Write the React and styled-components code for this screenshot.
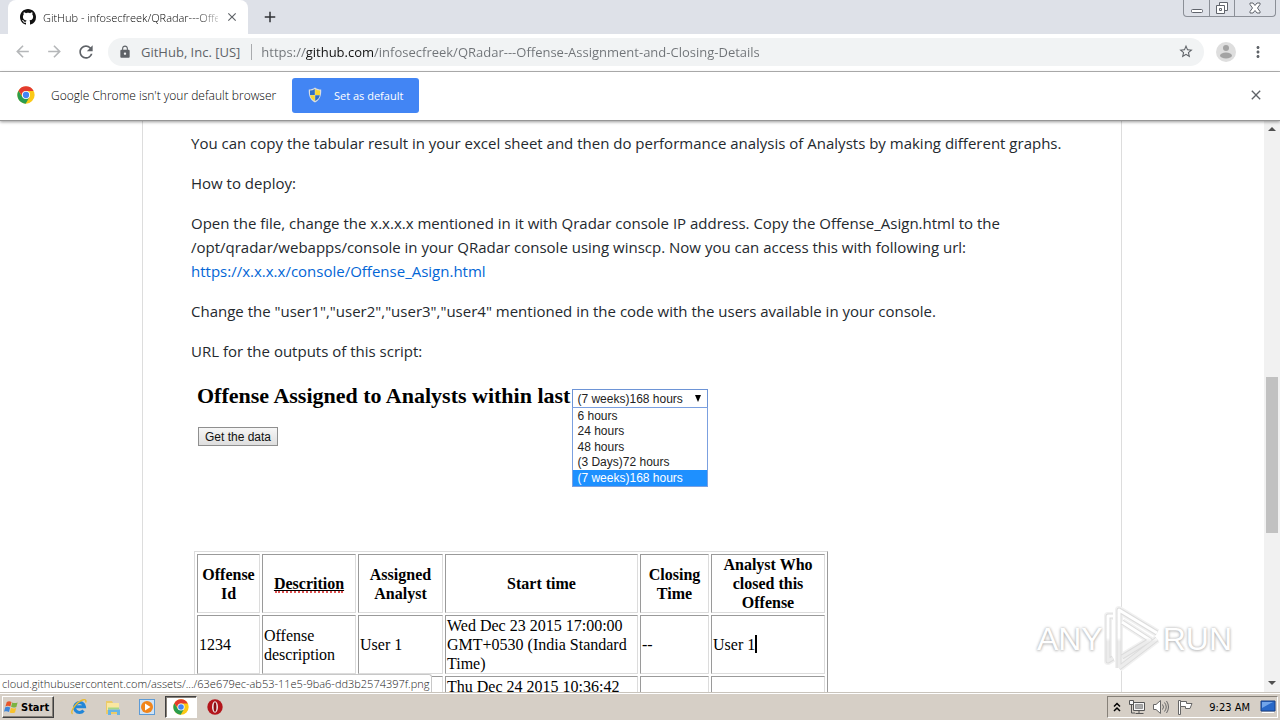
import React, { useState } from 'react';
import styled, { createGlobalStyle, css } from 'styled-components';
import {
    MdAdd,
    MdArrowBack,
    MdArrowForward,
    MdClose,
    MdLock,
    MdMoreVert,
    MdRefresh,
    MdStarBorder,
} from 'react-icons/md';

const GlobalStyle = createGlobalStyle`
    * {
        box-sizing: border-box;
    }

    body {
        margin: 0;
        background: #fff;
    }

    button {
        padding: 0;
        border: 0;
        background: none;
        font: inherit;
        color: inherit;
    }
`;

const uiFont = '"Open Sans", "Noto Sans", sans-serif';
const trayFont = '"DejaVu Sans Condensed", "DejaVu Sans", sans-serif';

const Desktop = styled.div`
    display: flex;
    flex-direction: column;
    height: 100vh;
    overflow: hidden;
    font-family: ${uiFont};
    font-size: 12px;
    color: #222;
`;

/* ---------- tab strip ---------- */

const TabStrip = styled.header`
    display: flex;
    flex: none;
    height: 34px;
    padding-left: 8px;
    background: #dee1e8;
`;

const Tab = styled.div`
    display: flex;
    align-items: center;
    gap: 7px;
    width: 240px;
    padding: 0 9px 0 12px;
    border-radius: 8px 8px 0 0;
    background: #fff;
`;

const TabTitle = styled.span`
    flex: 1;
    overflow: hidden;
    white-space: nowrap;
    font-size: 11px;
    font-weight: 300;
    color: #000;
    mask-image: linear-gradient(90deg, #000 88%, transparent 104%);
`;

const IconButton = styled.button`
    display: flex;
    flex: none;
    align-items: center;
    justify-content: center;
    width: ${({ $size }) => $size}px;
    height: ${({ $size }) => $size}px;
    color: ${({ $color }) => $color || '#5f6368'};
`;

const NewTab = styled(IconButton)`
    margin: 5px 0 0 10px;
`;

const WindowButtons = styled.div`
    display: flex;
    height: 17px;
    margin: 0 4px 0 auto;
    border: 1px solid #8b8f97;
    border-top: 0;
    border-radius: 0 0 4px 4px;
`;

const WindowButton = styled.button`
    display: flex;
    align-items: center;
    justify-content: center;
    width: ${({ $wide }) => ($wide ? 41 : 25)}px;

    & + & {
        border-left: 1px solid #8b8f97;
    }
`;

/* ---------- toolbar ---------- */

const Toolbar = styled.nav`
    display: flex;
    flex: none;
    align-items: center;
    height: 38px;
    padding: 0 10px 2px;
    border-bottom: 1px solid #b4b4b4;
    background: #fff;
`;

const NavButtons = styled.div`
    display: flex;
    gap: 8px;
    margin-right: 10px;
`;

const AddressBar = styled.div`
    display: flex;
    flex: 1;
    align-items: center;
    height: 28px;
    padding: 0 10px;
    border-radius: 14px;
    background: #f1f3f4;
    font-size: 13px;
    color: #5f6368;
`;

const SiteOwner = styled.label`
    margin-left: 9px;
    padding-right: 11px;
    border-right: 1px solid #a9abae;
    line-height: 16px;
    white-space: nowrap;
`;

const AddressInput = styled.input`
    flex: 1;
    min-width: 0;
    padding: 0 9px;
    border: 0;
    outline: 0;
    font: inherit;
    color: #6f7377;
    background: linear-gradient(90deg, #6f7377 53px, #111 53px, #111 121px, #6f7377 121px);
    background-clip: text;
    -webkit-text-fill-color: transparent;
`;

const ToolbarEnd = styled.div`
    display: flex;
    align-items: center;
    gap: 10px;
    margin-left: 12px;
`;

/* ---------- default browser bar ---------- */

const InfoBar = styled.section`
    position: relative;
    z-index: 1;
    display: flex;
    flex: none;
    align-items: center;
    height: 49px;
    padding: 0 14px 2px 17px;
    border-bottom: 1px solid #969696;
    background: #fff;
    box-shadow: 0 1px 3px rgba(0, 0, 0, 0.4);
`;

const InfoText = styled.span`
    margin: 0 16px;
    font-size: 12px;
    font-weight: 300;
    color: #000;
`;

const DefaultButton = styled.button`
    display: flex;
    align-items: center;
    justify-content: center;
    gap: 12px;
    width: 127px;
    height: 35px;
    margin-right: auto;
    border-radius: 3px;
    background: #4285f4;
    font-size: 11px;
    color: #fff;
`;

/* ---------- page ---------- */

const Viewport = styled.div`
    position: relative;
    display: flex;
    flex: 1;
    min-height: 0;
    background: #fff;
`;

const PageArea = styled.main`
    flex: 1;
    overflow: hidden;
`;

const Readme = styled.article`
    max-width: 980px;
    min-height: 100%;
    margin: 0 auto;
    padding: 10px 48px 0;
    border: 1px solid #ddd;
    border-width: 0 1px;
    font-size: 15px;
    line-height: 24px;
    color: #24292e;

    p {
        margin: 0 0 16px;
    }

    a {
        color: #0366d6;
        text-decoration: none;
    }
`;

const Output = styled.section`
    padding: 0 3px;
    font-family: 'Liberation Serif', serif;
    color: #000;
`;

const PeriodRow = styled.div`
    display: flex;
    align-items: center;
    gap: 2px;
    padding: 4px 0 0 3px;
`;

const Title = styled.label`
    font-size: 22px;
    font-weight: bold;
    line-height: 24px;
`;

const Period = styled.div`
    position: relative;
    width: 136px;
    margin-top: 6px;
    font: 12px 'Liberation Sans', sans-serif;
`;

const PeriodSelect = styled.select`
    display: block;
    width: 100%;
    height: 19px;
    padding: 0 20px 0 4px;
    border: 1px solid #6d94d6;
    appearance: none;
    outline: 0;
    background: #fff;
    font: inherit;
    color: #222;
`;

const SelectArrow = styled.svg`
    position: absolute;
    top: 6px;
    right: 6px;
    pointer-events: none;
`;

const PeriodList = styled.ul`
    position: absolute;
    top: 18px;
    left: 0;
    width: 100%;
    margin: 0;
    padding: 0;
    border: 1px solid #7ba0e0;
    background: #fff;
    list-style: none;
`;

const PeriodOption = styled.li`
    padding-left: 4px;
    line-height: 15px;
    color: #222;

    &:nth-child(odd) {
        line-height: 16px;
    }

    ${({ $selected }) => $selected && css`
        background: #1e90ff;
        color: #fff;
    `}
`;

const GetData = styled.button`
    display: block;
    width: 80px;
    height: 19px;
    margin: 19px 0 105px 4px;
    border: 1px solid #8f8f8f;
    background: linear-gradient(#f6f6f6, #dedede);
    font: 12px 'Liberation Sans', sans-serif;
    color: #111;
`;

const OffenseTable = styled.table`
    width: 634px;
    table-layout: fixed;
    border: 1px solid #dcdcdc;
    border-right-color: #9a9a9a;
    border-spacing: 2px;
    font-size: 16px;
    line-height: 19px;

    th,
    td {
        padding: 0 1px;
        border: 1px solid #9a9a9a;
        border-right-color: #dcdcdc;
        border-bottom-color: #dcdcdc;
    }

    td {
        text-align: left;
    }
`;

const Misspelled = styled.span`
    text-decoration: underline;

    &::after {
        content: '';
        display: block;
        width: 68px;
        margin: -2px auto 0;
        border-bottom: 2px dotted #e05050;
    }
`;

const Caret = styled.span`
    display: inline-block;
    width: 2px;
    height: 18px;
    vertical-align: text-bottom;
    background: #000;
`;

const Scrollbar = styled.div`
    display: flex;
    flex: none;
    flex-direction: column;
    align-items: center;
    width: 16px;
    background: #f1f1f1;
`;

const ScrollSpace = styled.div`
    flex: ${({ $grow }) => $grow};
`;

const ScrollThumb = styled.div`
    flex: 155;
    width: 12px;
    background: #c1c1c1;
`;

const StatusBubble = styled.div`
    position: absolute;
    bottom: 0;
    left: 0;
    height: 18px;
    padding: 0 2px;
    border: 1px solid #c8c8c8;
    border-width: 1px 1px 0 0;
    border-radius: 0 3px 0 0;
    background: #fff;
    font-size: 11px;
    font-weight: 300;
    line-height: 17px;
    white-space: nowrap;
    color: #222;
`;

const Watermark = styled.div`
    position: absolute;
    right: 48px;
    bottom: 20px;
    display: flex;
    align-items: center;
    gap: 1px;
    font: 32px 'Liberation Sans', sans-serif;
    color: #fff;
    text-shadow: 0 0 3px #aaa, 0 1px 3px #ccc;
`;

/* ---------- taskbar ---------- */

const Taskbar = styled.footer`
    display: flex;
    flex: none;
    align-items: center;
    height: 28px;
    padding: 1px 2px 0;
    border-top: 1px solid #c9c4bc;
    background: #d6cfc6;
    box-shadow: inset 0 1px #fff;
`;

const StartButton = styled.button`
    display: flex;
    align-items: center;
    gap: 2px;
    height: 22px;
    width: 52px;
    padding-left: 1px;
    border: 1px solid;
    border-color: #fff #404040 #404040 #fff;
    box-shadow: inset -1px -1px #868078;
    font: bold 11px ${trayFont};
    color: #000;
`;

const QuickLaunch = styled.div`
    display: flex;
    gap: 2px;
    margin-left: 9px;
`;

const TaskButton = styled.button`
    display: flex;
    align-items: center;
    justify-content: center;
    width: 32px;
    height: 22px;

    ${({ $active }) => $active && css`
        border: 1px solid;
        border-color: #404040 #fff #fff #404040;
        background: #fff;
        box-shadow: inset 1px 1px #868078;
    `}
`;

const Tray = styled.div`
    display: flex;
    align-items: center;
    gap: 8px;
    height: 22px;
    margin-left: auto;
    padding: 0 1px 0 5px;
    border: 1px solid;
    border-color: #868078 #fff #fff #868078;
    font: 11px ${trayFont};
    color: #000;
`;

const Clock = styled.time`
    margin: 0 2px 0 8px;
`;

const GithubMark = () => (
    <svg width="16" height="16" viewBox="0 0 16 16">
        <path d="M8 0C3.58 0 0 3.58 0 8c0 3.54 2.29 6.53 5.47 7.59.4.07.55-.17.55-.38 0-.19-.01-.82-.01-1.49-2.01.37-2.53-.49-2.69-.94-.09-.23-.48-.94-.82-1.13-.28-.15-.68-.52-.01-.53.63-.01 1.08.58 1.23.82.72 1.21 1.87.87 2.33.66.07-.52.28-.87.51-1.07-1.78-.2-3.64-.89-3.64-3.95 0-.87.31-1.59.82-2.15-.08-.2-.36-1.02.08-2.12 0 0 .67-.21 2.2.82.64-.18 1.32-.27 2-.27.68 0 1.36.09 2 .27 1.53-1.04 2.2-.82 2.2-.82.44 1.1.16 1.92.08 2.12.51.56.82 1.27.82 2.15 0 3.07-1.87 3.75-3.65 3.95.29.25.54.73.54 1.48 0 1.07-.01 1.93-.01 2.2 0 .21.15.46.55.38A8.013 8.013 0 0016 8c0-4.42-3.58-8-8-8z" fill="#111" />
    </svg>
);

const ChromeLogo = ({ size }) => (
    <svg width={size} height={size} viewBox="0 0 24 24">
        <circle cx="12" cy="12" r="11.5" fill="#fbc916" />
        <path d="M2 6.300A11.500 11.500 0 0 0 11.500 23.500L16.800 14.700 12 12 7.200 14.700Z" fill="#2a9d4e" />
        <path d="M2 6.300A11.500 11.500 0 0 1 22 6.300V6.800H12A5.300 5.300 0 0 0 6.900 13Z" fill="#e33b2e" />
        <circle cx="12" cy="12" r="5.400" fill="#fff" />
        <circle cx="12" cy="12" r="4.200" fill="#4285f4" />
    </svg>
);

const ShieldIcon = () => (
    <svg width="14" height="16" viewBox="0 0 14 16">
        <path d="M7 .5C5 2 3 2.500.8 2.500.5 8.500 2 13 7 15.500 12 13 13.500 8.500 13.200 2.500 11 2.500 9 2 7 .5Z" fill="#d9dde2" />
        <path d="M6.800 2C5.300 3 3.700 3.500 2 3.600V8h4.800Z" fill="#2f6fc4" />
        <path d="M7.200 2C8.700 3 10.300 3.500 12 3.600V8H7.200Z" fill="#f6d632" />
        <path d="M2.100 8.300H6.800V14C4 12.600 2.500 10.500 2.100 8.300Z" fill="#f6d632" />
        <path d="M11.900 8.300H7.200V14C10 12.600 11.500 10.500 11.900 8.300Z" fill="#2f6fc4" />
    </svg>
);

const ProfileIcon = () => (
    <svg width="20" height="20" viewBox="0 0 20 20">
        <circle cx="10" cy="10" r="10" fill="#dedede" />
        <circle cx="10" cy="6" r="3" fill="#a3a3a3" />
        <ellipse cx="10" cy="13.500" rx="6" ry="3" fill="#a3a3a3" />
    </svg>
);

const MinimizeIcon = () => (
    <svg width="12" height="14" viewBox="0 0 12 14">
        <rect x=".5" y="8.500" width="11" height="3" rx="1" fill="#fff" stroke="#60646c" />
    </svg>
);

const RestoreIcon = () => (
    <svg width="14" height="14" viewBox="0 0 14 14" fill="#fff" stroke="#60646c">
        <path d="M4.500 1.500h8v8h-8z" />
        <path d="M1.500 4.500h8v8h-8z" />
        <path d="M4.500 7.500h2v2h-2z" />
    </svg>
);

const CloseWindowIcon = () => (
    <svg width="12" height="12" viewBox="0 0 12 12">
        <path d="M1 1h3l2 2.500L8 1h3v1.500L8.500 6 11 9.500V11H8L6 8.500 4 11H1V9.500L3.500 6 1 2.500Z" fill="#fff" stroke="#60646c" />
    </svg>
);

const ArrowIcon = ({ down }) => (
    <svg width="16" height="17" viewBox="0 0 16 17">
        <path d={down ? 'M4 6h8L8 10Z' : 'M4 10h8L8 6Z'} fill="#505050" />
    </svg>
);

const WindowsFlag = () => (
    <svg width="15" height="15" viewBox="0 0 16 16">
        <path d="M3 2C5 1 6.500 1.300 8 2.200L6.800 7C5 6 3.500 6 1.500 6.800Z" fill="#e8562a" />
        <path d="M8.800 2.600C10.500 3.500 12.500 3.400 14.500 2.600L13.200 7.400C11 8.200 9.300 8.200 7.500 7.300Z" fill="#7cb342" />
        <path d="M1.300 7.700C3.200 6.900 5 7 6.600 7.900L5.300 12.800C3.700 11.900 2 11.800 0 12.500Z" fill="#3f86d8" />
        <path d="M7.400 8.300C9 9.200 11 9.200 13 8.400L11.700 13.200C9.700 14 7.900 14 6.100 13.200Z" fill="#f8c22c" />
    </svg>
);

const ExplorerBrowserIcon = () => (
    <svg width="18" height="18" viewBox="0 0 18 18" fill="none">
        <path d="M13.500 12.500A5 5 0 1 1 14.500 8.800H5.500" stroke="#2186d8" strokeWidth="3" />
        <path d="M2.500 16C-.5 14 6 4.500 12.500 2c3-1 4 .2 3.200 2.400" stroke="#e9b92c" strokeWidth="1.400" />
    </svg>
);

const FolderIcon = () => (
    <svg width="18" height="18" viewBox="0 0 18 18">
        <path d="M2 3h6l1 2h6v11H2Z" fill="#eccb68" />
        <path d="M3 5h12v7H3Z" fill="#fae7a0" />
        <path d="M4 9.500h11v2H4Z" fill="#a6d785" />
        <path d="M4 16v-4.500h12V17h-3v-3H7v3H4Z" fill="#66b4e6" />
    </svg>
);

const MediaPlayerIcon = () => (
    <svg width="18" height="18" viewBox="0 0 18 18">
        <rect x="1.500" y="1.500" width="15" height="15" fill="#cfe3f6" stroke="#5d9bd6" />
        <circle cx="9" cy="9" r="6" fill="#f1851b" />
        <path d="M7 5.500v7L12.500 9Z" fill="#fff" />
    </svg>
);

const OperaIcon = () => (
    <svg width="16" height="16" viewBox="0 0 16 16">
        <circle cx="8" cy="8" r="7.700" fill="#b3151b" />
        <ellipse cx="8" cy="8" rx="3" ry="5.800" fill="#eee6e6" />
        <ellipse cx="8" cy="8" rx="1.400" ry="4.800" fill="#8c0d12" />
    </svg>
);

const ChevronsIcon = () => (
    <svg width="8" height="10" viewBox="0 0 8 10" fill="none" stroke="#000" strokeWidth="1.500">
        <path d="M1 4.500 4 1.500 7 4.500M1 9 4 6 7 9" />
    </svg>
);

const NetworkIcon = () => (
    <svg width="16" height="16" viewBox="0 0 16 16" fill="#f6f6f6" stroke="#555">
        <path d="M4.500 3.500h11v8h-11z" />
        <path d="M6.500 5.500h7v4h-7z" fill="#aaa" stroke="#999" />
        <path d="M6.500 14.500h8M10 12v2" />
        <path d="M.5 1.500h4v4h-4z" />
        <path d="M2.500 6v8H6" fill="none" />
    </svg>
);

const SpeakerIcon = () => (
    <svg width="16" height="16" viewBox="0 0 16 16" fill="none" stroke="#666">
        <path d="M.5 5.500h2.500L7.500 1.500v13L3 10.500H.5Z" fill="#fff" />
        <path d="M9.500 5.500q2 2.500 0 5M11.500 3.500q3.500 4.500 0 9M13.500 2q4 6 0 12" />
    </svg>
);

const FlagIcon = () => (
    <svg width="16" height="16" viewBox="0 0 16 16" fill="#fff" stroke="#666">
        <path d="M1.500 1.500h2v14h-2z" />
        <path d="M3.500 2.500h6v2h5.500l-2 5H8.500v-2h-5Z" />
    </svg>
);

const ShowDesktopIcon = () => (
    <svg width="16" height="14" viewBox="0 0 16 14">
        <path d="M1 1h14v10H1Z" fill="#2868c8" stroke="#173f84" />
        <path d="M2 2h11L2 8Z" fill="#71a5ea" />
        <path d="M2 12.500h12" stroke="#fff" />
    </svg>
);

const markPath = 'M9 10H4v45l5-3M15 62V4L53 27M18 16 46 34 18 51M15 62 53 33';

const PlayMark = () => (
    <svg width="58" height="66" viewBox="0 0 58 66" fill="none" strokeLinejoin="round">
        <defs>
            <linearGradient id="markFill" gradientUnits="userSpaceOnUse" x1="0" y1="0" x2="0" y2="66">
                <stop offset=".48" stopColor="#fff" />
                <stop offset=".54" stopColor="#ececec" />
            </linearGradient>
        </defs>
        <path d={markPath} stroke="#f1f1f1" strokeWidth="8" />
        <path d={markPath} stroke="#dcdcdc" strokeWidth="5" />
        <path d={markPath} stroke="url(#markFill)" strokeWidth="3" />
    </svg>
);

const periods = ['6 hours', '24 hours', '48 hours', '(3 Days)72 hours', '(7 weeks)168 hours'];

const columns = [
    { name: 'Offense Id', width: 63 },
    { name: 'Descrition', width: 94, misspelled: true },
    { name: 'Assigned Analyst', width: 85 },
    { name: 'Start time', width: 193 },
    { name: 'Closing Time', width: 69 },
    { name: 'Analyst Who closed this Offense' },
];

const offenses = [
    ['1234', 'Offense description', 'User 1', 'Wed Dec 23 2015 17:00:00 GMT+0530 (India Standard Time)', '--', 'User 1'],
    ['', '', '', 'Thu Dec 24 2015 10:36:42', '', ''],
];

const quickLaunch = [
    { name: 'Internet Explorer', icon: <ExplorerBrowserIcon /> },
    { name: 'Windows Explorer', icon: <FolderIcon /> },
    { name: 'Media Player', icon: <MediaPlayerIcon /> },
    { name: 'Google Chrome', icon: <ChromeLogo size={16} />, active: true },
    { name: 'Opera', icon: <OperaIcon /> },
];

const App = () => {

    const [url, setUrl] = useState('https://github.com/infosecfreek/QRadar---Offense-Assignment-and-Closing-Details');
    const [period, setPeriod] = useState('(7 weeks)168 hours');

    return (
        <Desktop>
            <GlobalStyle />
            <TabStrip>
                <Tab>
                    <GithubMark />
                    <TabTitle>GitHub - infosecfreek/QRadar---Offe</TabTitle>
                    <IconButton $size={14} aria-label="Close tab"><MdClose size={14} /></IconButton>
                </Tab>
                <NewTab $size={24} $color="#303236" aria-label="New tab"><MdAdd size={18} /></NewTab>
                <WindowButtons>
                    <WindowButton aria-label="Minimize"><MinimizeIcon /></WindowButton>
                    <WindowButton aria-label="Restore"><RestoreIcon /></WindowButton>
                    <WindowButton $wide aria-label="Close"><CloseWindowIcon /></WindowButton>
                </WindowButtons>
            </TabStrip>

            <Toolbar>
                <NavButtons>
                    <IconButton $size={24} $color="#b5b7b9" aria-label="Back"><MdArrowBack size={19} /></IconButton>
                    <IconButton $size={24} $color="#b5b7b9" aria-label="Forward"><MdArrowForward size={19} /></IconButton>
                    <IconButton $size={24} aria-label="Reload"><MdRefresh size={20} /></IconButton>
                </NavButtons>
                <AddressBar>
                    <MdLock size={14} />
                    <SiteOwner htmlFor="address">GitHub, Inc. [US]</SiteOwner>
                    <AddressInput id="address" value={url} onChange={(e) => setUrl(e.target.value)} />
                    <IconButton $size={16} aria-label="Bookmark"><MdStarBorder size={17} /></IconButton>
                </AddressBar>
                <ToolbarEnd>
                    <IconButton $size={20} aria-label="Profile"><ProfileIcon /></IconButton>
                    <IconButton $size={24} aria-label="Menu"><MdMoreVert size={18} /></IconButton>
                </ToolbarEnd>
            </Toolbar>

            <InfoBar>
                <ChromeLogo size={18} />
                <InfoText>Google Chrome isn't your default browser</InfoText>
                <DefaultButton><ShieldIcon />Set as default</DefaultButton>
                <IconButton $size={20} aria-label="Dismiss"><MdClose size={16} /></IconButton>
            </InfoBar>

            <Viewport>
                <PageArea>
                    <Readme>
                        <p>You can copy the tabular result in your excel sheet and then do performance analysis of Analysts by making different graphs.</p>
                        <p>How to deploy:</p>
                        <p>
                            Open the file, change the x.x.x.x mentioned in it with Qradar console IP address. Copy the Offense_Asign.html to the
                            <br />
                            /opt/qradar/webapps/console in your QRadar console using winscp. Now you can access this with following url:
                            <br />
                            <a href="#output">https://x.x.x.x/console/Offense_Asign.html</a>
                        </p>
                        <p>Change the "user1","user2","user3","user4" mentioned in the code with the users available in your console.</p>
                        <p>URL for the outputs of this script:</p>

                        <Output id="output">
                            <PeriodRow>
                                <Title htmlFor="period">Offense Assigned to Analysts within last</Title>
                                <Period>
                                    <PeriodSelect id="period" value={period} onChange={(e) => setPeriod(e.target.value)}>
                                        {periods.map((name) => (
                                            <option key={name}>{name}</option>
                                        ))}
                                    </PeriodSelect>
                                    <SelectArrow width="8" height="7" viewBox="0 0 8 7">
                                        <path d="M1 0h6L4 7Z" fill="#000" />
                                    </SelectArrow>
                                    <PeriodList role="listbox">
                                        {periods.map((name) => (
                                            <PeriodOption
                                                key={name}
                                                role="option"
                                                aria-selected={name === period}
                                                $selected={name === period}
                                                onClick={() => setPeriod(name)}
                                            >
                                                {name}
                                            </PeriodOption>
                                        ))}
                                    </PeriodList>
                                </Period>
                            </PeriodRow>
                            <GetData>Get the data</GetData>
                            <OffenseTable>
                                <colgroup>
                                    {columns.map(({ name, width }) => (
                                        <col key={name} width={width} />
                                    ))}
                                </colgroup>
                                <thead>
                                    <tr>
                                        {columns.map(({ name, misspelled }) => (
                                            <th key={name}>{misspelled ? <Misspelled>{name}</Misspelled> : name}</th>
                                        ))}
                                    </tr>
                                </thead>
                                <tbody>
                                    {offenses.map((cells, row) => (
                                        <tr key={row}>
                                            {cells.map((cell, i) => (
                                                <td key={i}>
                                                    {cell}
                                                    {row === 0 && i === 5 && <Caret />}
                                                </td>
                                            ))}
                                        </tr>
                                    ))}
                                </tbody>
                            </OffenseTable>
                        </Output>
                    </Readme>
                </PageArea>
                <Scrollbar>
                    <ArrowIcon />
                    <ScrollSpace $grow={239} />
                    <ScrollThumb />
                    <ScrollSpace $grow={142} />
                    <ArrowIcon down />
                </Scrollbar>
                <StatusBubble>cloud.githubusercontent.com/assets/.../63e679ec-ab53-11e5-9ba6-dd3b2574397f.png</StatusBubble>
                <Watermark>
                    <span>ANY</span>
                    <PlayMark />
                    <span>RUN</span>
                </Watermark>
            </Viewport>

            <Taskbar>
                <StartButton><WindowsFlag />Start</StartButton>
                <QuickLaunch>
                    {quickLaunch.map(({ name, icon, active }) => (
                        <TaskButton key={name} $active={active} aria-label={name}>{icon}</TaskButton>
                    ))}
                </QuickLaunch>
                <Tray>
                    <ChevronsIcon />
                    <NetworkIcon />
                    <SpeakerIcon />
                    <FlagIcon />
                    <Clock>9:23 AM</Clock>
                    <ShowDesktopIcon />
                </Tray>
            </Taskbar>
        </Desktop>
    );
};

export default App;
